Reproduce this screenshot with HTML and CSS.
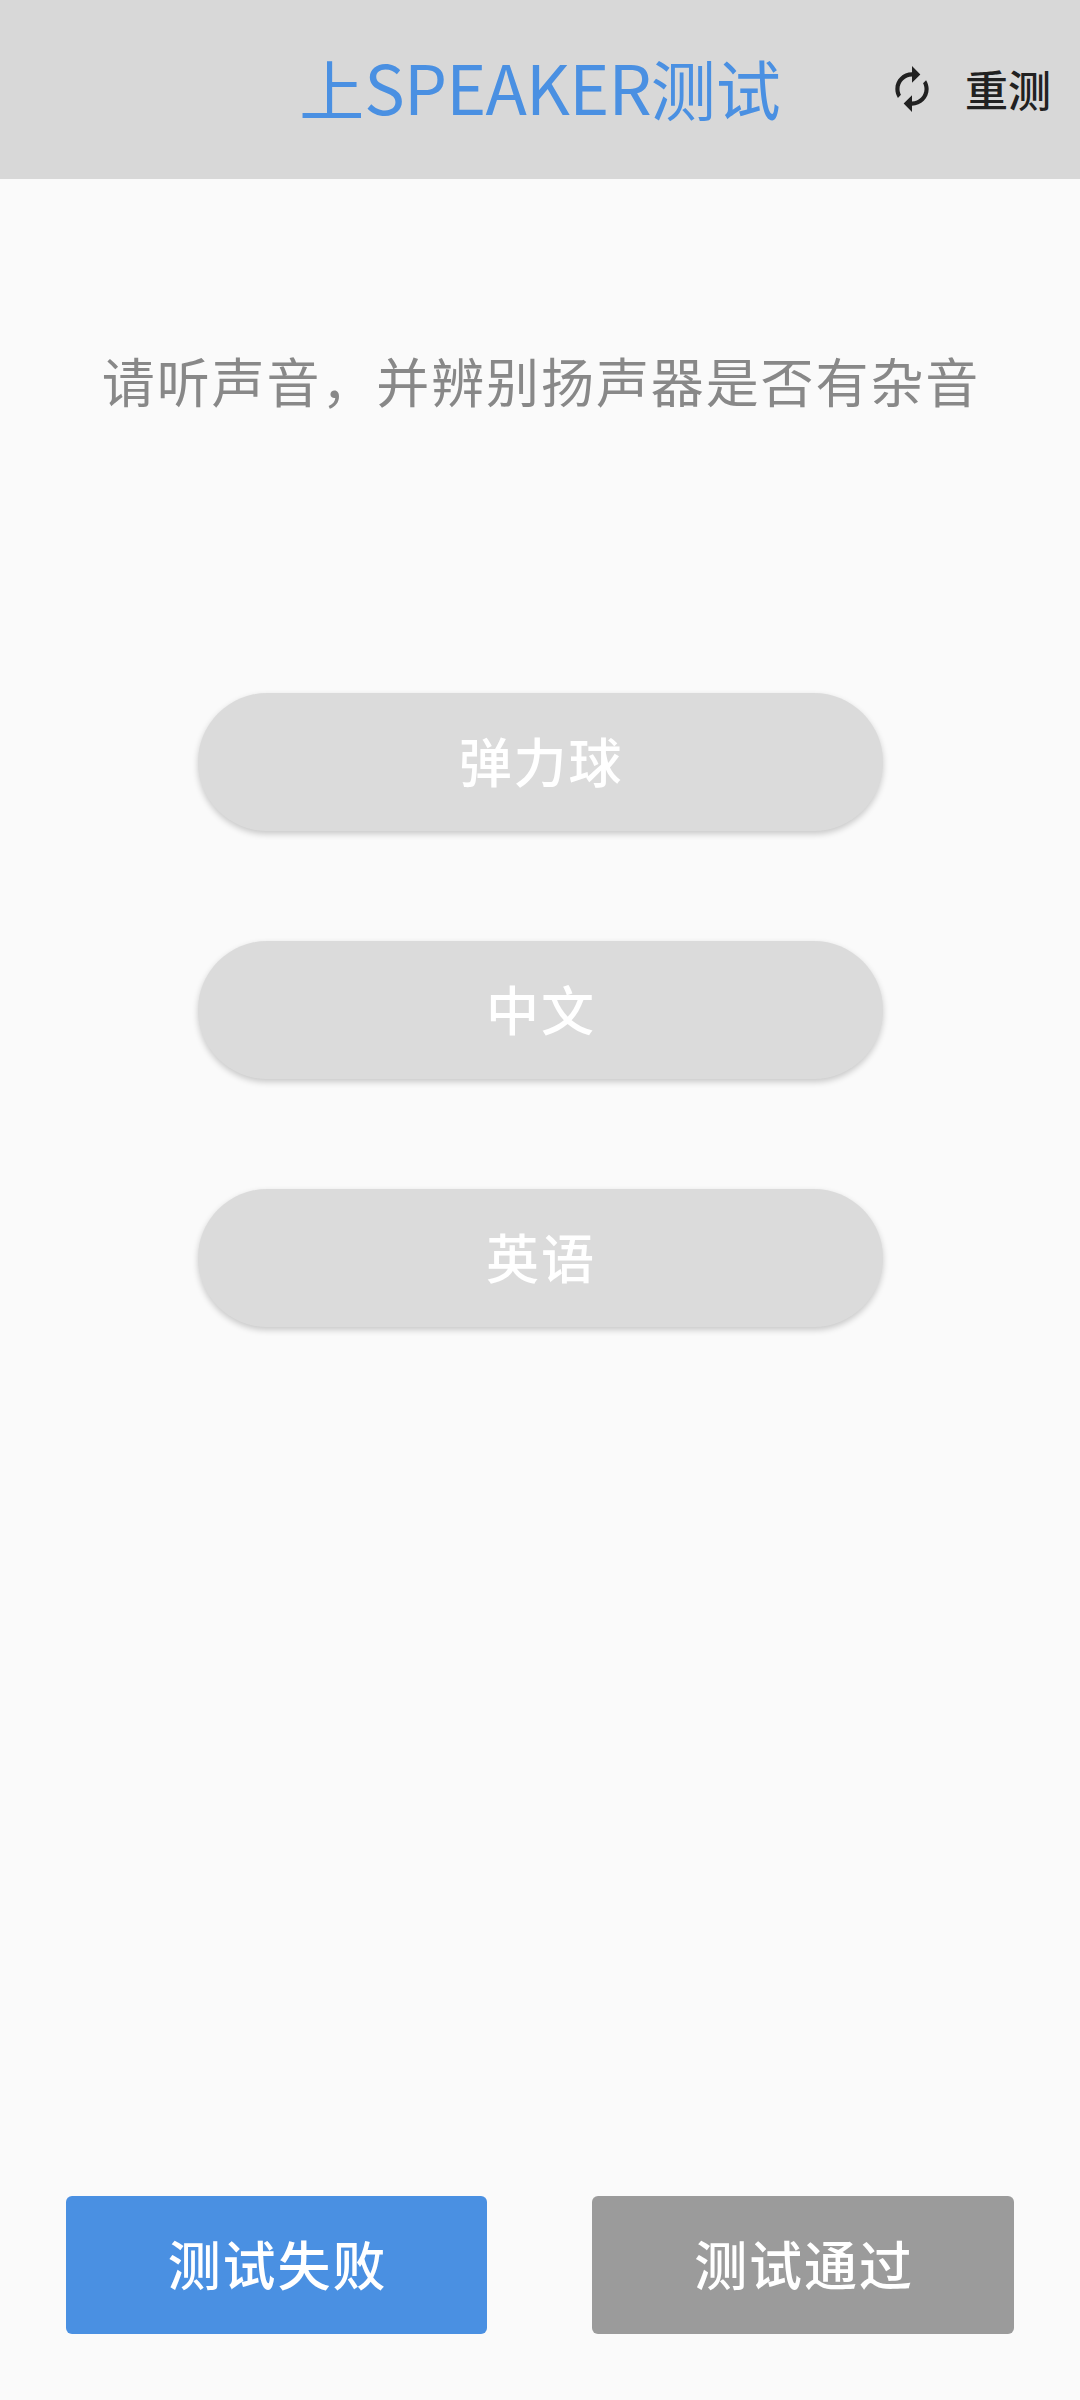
FILE: index.html
```html
<!DOCTYPE html>
<html lang="zh-CN">
<head>
  <meta charset="UTF-8" />
  <meta name="viewport" content="width=device-width, initial-scale=1" />
  <title>上SPEAKER测试</title>
  <link rel="stylesheet" href="styles.css">
</head>
<body>
  <header class="header">
    <h1>上<span class="latin">SPEAKER</span>测试</h1>
    <button class="retest" id="retestBtn">
      <svg class="retest-icon" viewBox="0 0 24 24" aria-hidden="true">
        <path d="M12 6v3l4-4-4-4v3c-4.42 0-8 3.58-8 8 0 1.57.46 3.03 1.24 4.26L6.7 14.8c-.45-.83-.7-1.79-.7-2.8 0-3.31 2.69-6 6-6zm6.76 1.74L17.3 9.2c.44.84.7 1.79.7 2.8 0 3.31-2.69 6-6 6v-3l-4 4 4 4v-3c4.42 0 8-3.58 8-8 0-1.57-.46-3.03-1.24-4.26z"/>
      </svg>
      <span>重测</span>
    </button>
  </header>

  <main class="content">
    <p class="message">请听声音，并辨别扬声器是否有杂音</p>
    <div class="sounds">
      <button class="sound">弹力球</button>
      <button class="sound">中文</button>
      <button class="sound">英语</button>
    </div>
  </main>

  <footer class="actions">
    <button class="action fail">测试失败</button>
    <button class="action pass">测试通过</button>
  </footer>
</body>
</html>
```
FILE: styles.css
```css
* {
  box-sizing: border-box;
}

body {
  margin: 0;
  height: 2400px;
  display: flex;
  flex-direction: column;
  background: #fafafa;
  font-family: "Noto Sans CJK SC", sans-serif;
}

button {
  padding: 0;
  border: none;
  font-family: inherit;
  cursor: pointer;
}

.header {
  height: 179px;
  padding-bottom: 3px;
  display: grid;
  grid-template-columns: 1fr auto 1fr;
  align-items: center;
  background: #d8d8d8;
}

h1 {
  grid-column: 2;
  margin: 0;
  padding-bottom: 4px;
  font-size: 65px;
  font-weight: 400;
  line-height: 90px;
  color: #4a90e2;
  white-space: nowrap;
}

.latin {
  font-size: 68px;
  letter-spacing: -0.8px;
}

.retest {
  display: flex;
  align-items: center;
  justify-content: flex-end;
  gap: 28px;
  padding-right: 29px;
  background: none;
  color: #212121;
  font-size: 43px;
  font-weight: 500;
  line-height: 60px;
}

.retest-icon {
  width: 50px;
  height: 50px;
  margin-top: 2px;
  fill: currentColor;
}

.content {
  flex: 1;
}

.message {
  margin: 162px 0 0;
  padding-left: 2px;
  font-size: 53px;
  line-height: 78px;
  letter-spacing: 1.9px;
  text-align: center;
  color: #888;
}

.sounds {
  display: flex;
  flex-direction: column;
  align-items: center;
  gap: 110px;
  margin-top: 274px;
}

.sound {
  width: 685px;
  height: 138px;
  border-radius: 69px;
  background: #dbdbdb;
  box-shadow: 0 3px 6px rgba(0, 0, 0, 0.2);
}

.sound,
.action {
  padding: 0 0 4px 2px;
  color: #fff;
  font-size: 53px;
  font-weight: 500;
  letter-spacing: 1.9px;
}

.actions {
  display: grid;
  grid-template-columns: 421px 422px;
  gap: 105px;
  padding: 0 66px 66px;
}

.action {
  height: 138px;
  border-radius: 6px;
}

.fail {
  background: #4a90e2;
}

.pass {
  background: #9b9b9b;
}
```
